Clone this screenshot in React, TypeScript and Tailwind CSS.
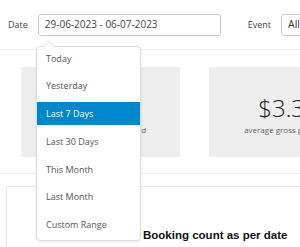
import React from 'react';

const RANGES = ['Today', 'Yesterday', 'Last 7 Days', 'Last 30 Days', 'This Month', 'Last Month', 'Custom Range'];

const StatCard: React.FC<{ value: string; label: string }> = ({ value, label }) => (
  <div className="w-[159px] h-[90px] shrink-0 bg-[#eeeeee] flex flex-col items-center pt-[27px]">
    <div className="text-[24px] leading-[28px] font-light text-[#222] whitespace-nowrap">{value}</div>
    <div className="mt-[2px] text-[8px] leading-[12px] text-[#666] whitespace-nowrap">{label}</div>
  </div>
);

export default function App() {
  const active = 'Last 7 Days';

  return (
    <div className="relative w-[300px] h-[247px] overflow-hidden bg-white font-['Open_Sans',sans-serif]">
      {/* filter bar */}
      <div className="h-[50px] flex items-center border-b border-[#ececec] pl-[8px] whitespace-nowrap">
        <span className="text-[9px] text-[#444]">Date</span>
        <div className="ml-[10px] w-[183px] h-[22px] shrink-0 border border-[#c8c8c8] rounded-[3px] flex items-center pl-[6px] text-[10px] text-[#444]">
          29-06-2023 - 06-07-2023
        </div>
        <span className="ml-[27px] text-[9px] text-[#444]">Event</span>
        <div className="ml-[10px] w-[80px] h-[22px] shrink-0 border border-[#c8c8c8] rounded-[3px] flex items-center pl-[6px] text-[10.5px] text-[#333]">
          All
        </div>
      </div>

      {/* summary cards */}
      <div className="flex gap-[29px] pl-[21px] pt-[17px] pb-[16px] border-b border-[#ececec]">
        <StatCard value="1,284" label="number of seats booked" />
        <StatCard value="$3.38" label="average gross per ticket" />
      </div>

      {/* chart card */}
      <div className="pt-[12px] pl-[6px]">
        <div className="w-[320px] h-[80px] border border-[#e6e6e6] rounded-[2px] pl-[136px] pt-[41px]">
          <div className="font-['Liberation_Sans',Arial,sans-serif] font-bold text-[11.5px] leading-[14px] text-[#111] whitespace-nowrap">
            Booking count as per date
          </div>
        </div>
      </div>

      {/* date range dropdown */}
      <div className="absolute left-[36px] top-[46px] w-[105px] bg-white border border-[#dddddd] rounded-[4px] shadow-[0_1px_3px_rgba(0,0,0,0.08)] pb-[4px]">
        <div className="absolute -top-[6px] left-[6px] w-0 h-0 border-l-[6px] border-r-[6px] border-b-[6px] border-l-transparent border-r-transparent border-b-[#d6d6d6]" />
        <div className="absolute -top-[5px] left-[7px] w-0 h-0 border-l-[5px] border-r-[5px] border-b-[5px] border-l-transparent border-r-transparent border-b-white" />
        <ul className="flex flex-col gap-[4.7px]">
          {RANGES.map((r) => (
            <li
              key={r}
              className={`h-[23px] flex items-center pl-[9px] text-[9px] whitespace-nowrap ${
                r === active ? 'bg-[#0088cc] text-white' : 'text-[#555]'
              }`}
            >
              {r}
            </li>
          ))}
        </ul>
      </div>
    </div>
  );
}
